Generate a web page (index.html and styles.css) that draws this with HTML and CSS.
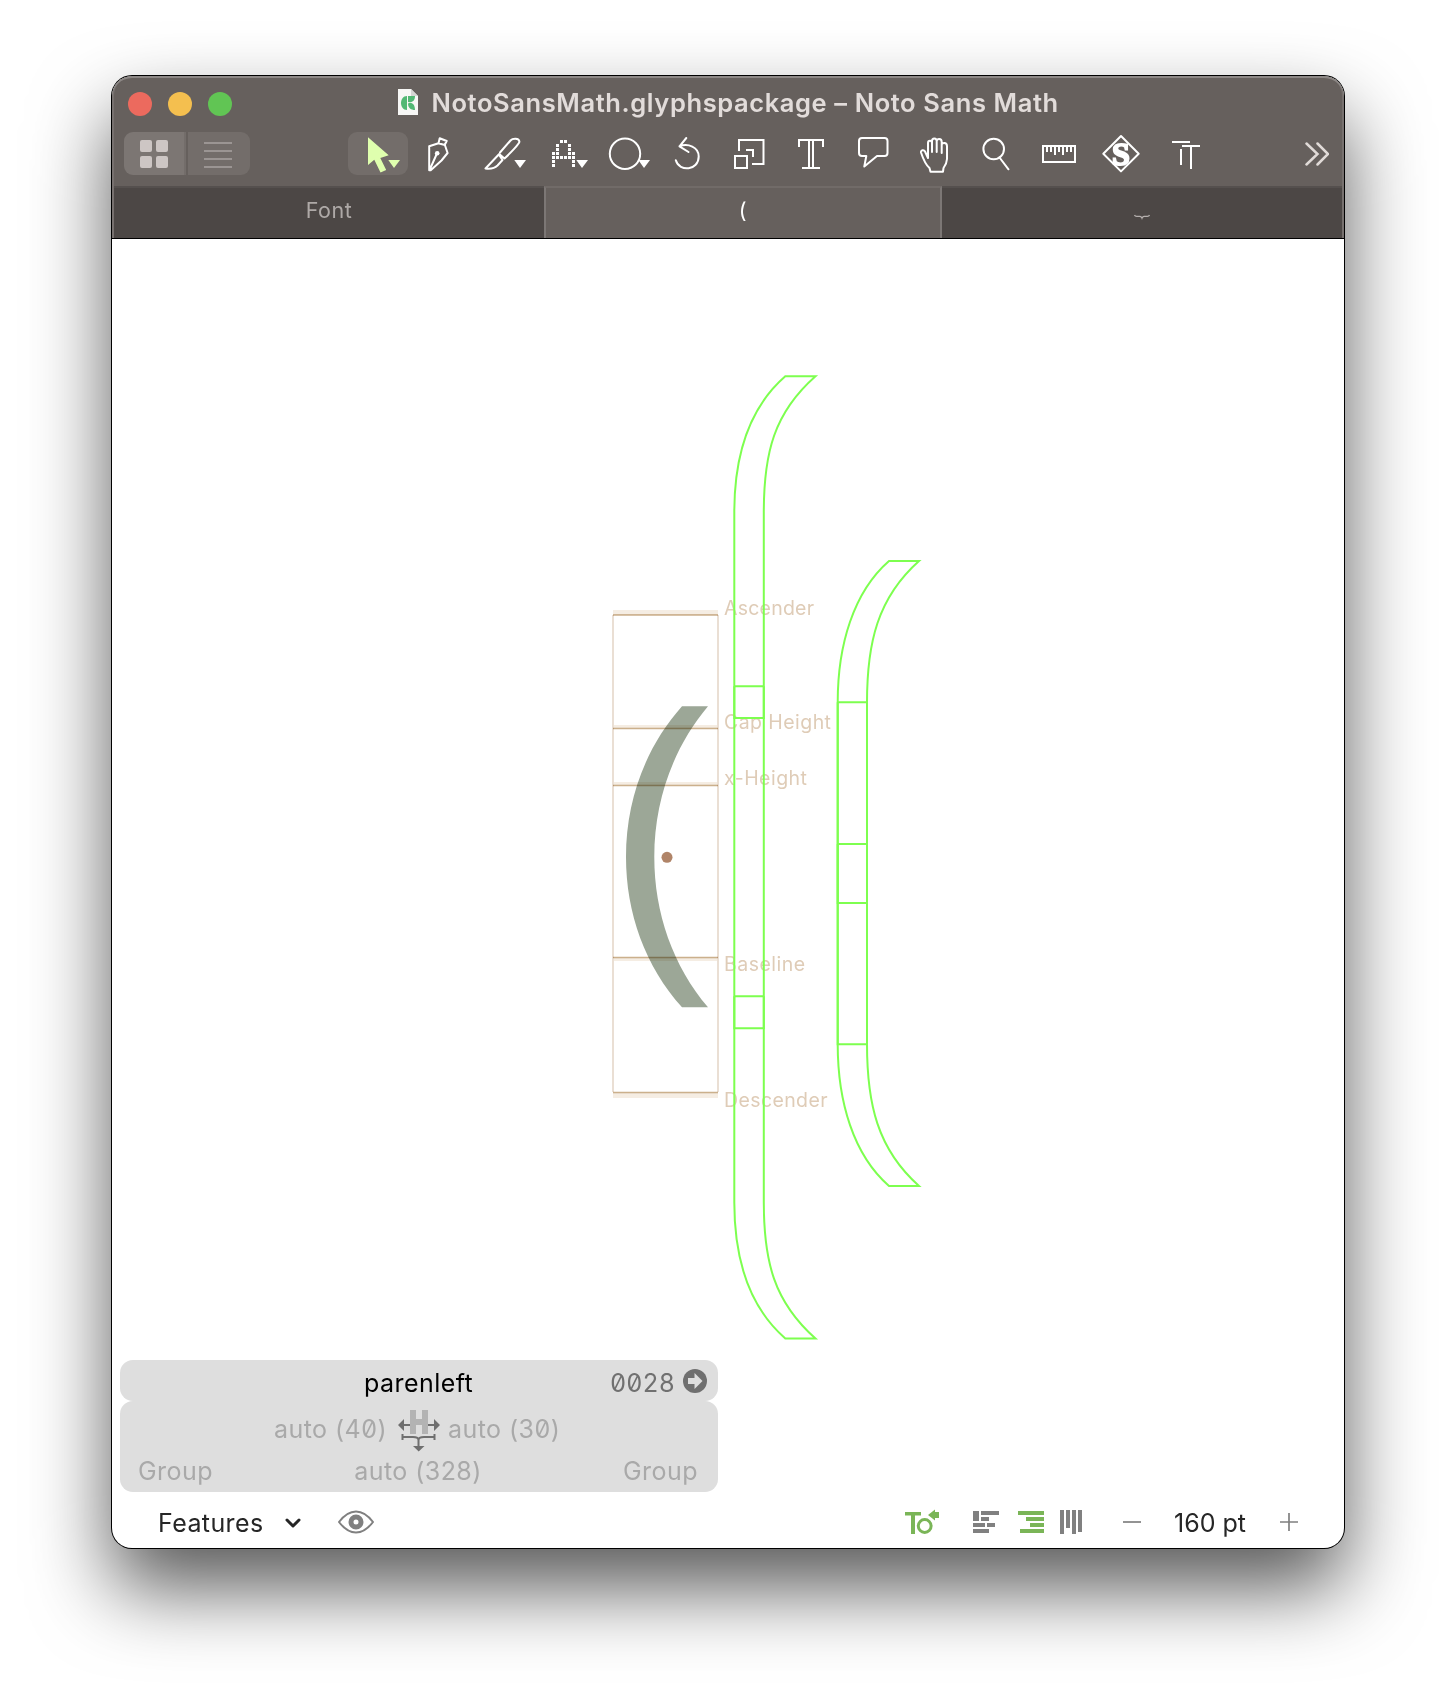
FILE: index.html
```html
<!DOCTYPE html>
<html lang="en">
<head>
<meta charset="utf-8">
<title>NotoSansMath.glyphspackage – Noto Sans Math</title>
<link rel="stylesheet" href="styles.css">
</head>
<body>
<main class="window">
  <header class="chrome">
    <div class="titlebar">
      <div class="lights"><i class="light red"></i><i class="light yellow"></i><i class="light green"></i></div>
      <svg class="doc" viewBox="0 0 20 26"><path d="M0 0H13L20 7V26H0Z" fill="#f7f7f5"/><path d="M13 0V7H20Z" fill="#d5d5d3"/><path d="M9 7C1 7 1 21 9 21ZM10 7H17C17 12 14 14 10 13ZM10 14.500C14 13 17 15 17 21C13 21 10 19 10 14.500Z" fill="#52b874"/></svg>
      <h1 class="title">NotoSansMath.glyphspackage – Noto Sans Math</h1>
    </div>
    <div class="toolbar">
      <div class="views">
        <span class="view view-on"><svg width="28" height="28" fill="#cdc6c4"><rect width="12" height="12" rx="2"/><rect x="16" width="12" height="12" rx="2"/><rect y="16" width="12" height="12" rx="2"/><rect x="16" y="16" width="12" height="12" rx="2"/></svg></span>
        <span class="view view-off"><svg width="28" height="28" fill="#9b9593"><path d="M0 2h28v2H0zM0 10h28v2H0zM0 18h28v2H0zM0 26h28v2H0z"/></svg></span>
      </div>
      <div class="tools">
        <svg viewBox="347 132 62 43"><rect x="348" y="132" width="60" height="43" rx="9" fill="#736d6a"/><path class="lime" d="M368 137.300V165L374.300 159.700L380.500 172.500L386.200 170L380.300 158L388.700 155.300ZM388.300 160H400L394 168Z"/></svg>
        <svg viewBox="409 132 62 43"><path class="line" d="M429.200 146.300V170.300H430.700L441.500 160.500L447.600 153L444.800 144.800L446.700 141L439.700 138.300L438.500 143.200ZM438.300 143.200L444.800 145M430 169L436.500 154.500"/><circle class="fill" cx="437.200" cy="153.200" r="2.300"/></svg>
        <svg viewBox="471 132 62 43"><path class="line" d="M500 152.500L510.500 140.500C512.500 138.400 519 137.800 519.400 141.700C519.600 143.500 510 153.500 504.500 158.500L499.200 154L485.500 168.500C491 169.200 494.500 168.500 497.500 165.500L502.500 160L499.500 155.500"/><path class="fill" d="M514.300 160H526L520 168Z"/></svg>
        <svg viewBox="533 132 62 43"><path class="fill" d="M560 140h3v3h-3zM564 140h3v3h-3zM556 144h3v3h-3zM568 144h3v3h-3zM556 148h3v3h-3zM568 148h3v3h-3zM552 152h3v3h-3zM556 152h3v3h-3zM568 152h3v3h-3zM572 152h3v3h-3zM552 156h3v3h-3zM556 156h3v3h-3zM560 156h3v3h-3zM564 156h3v3h-3zM568 156h3v3h-3zM572 156h3v3h-3zM552 160h3v3h-3zM572 160h3v3h-3zM552 164h3v3h-3zM572 164h3v3h-3zM576.300 160H588L582 168Z"/></svg>
        <svg viewBox="595 132 62 43"><circle class="line" cx="625" cy="153.700" r="15.200"/><path class="fill" d="M638.300 160H650L644 168Z"/></svg>
        <svg viewBox="657 132 62 43"><path class="line" d="M686.300 138L679.500 146.300L688.500 152M679.500 146.300C688 143 698.700 147 698.700 156.500C698.700 170.500 679.500 172.500 675.800 160.300"/></svg>
        <svg viewBox="719 132 62 43"><path class="line square" d="M739 151V140H763.500V164H752M746 150H753V157M735 156H747V168H735Z"/></svg>
        <svg viewBox="781 132 62 43"><path class="line square" d="M799 147V140H823V147M809 140V168M813 140V168M802 168H820"/></svg>
        <svg viewBox="843 132 62 43"><path class="line" d="M862 138H884.500Q887.500 138 887.500 141V153Q887.500 156 884.500 156H877L864.300 166.500L866.300 156H862Q859 156 859 153V141Q859 138 862 138Z"/></svg>
        <svg viewBox="905 132 62 43"><path class="line" d="M930.500 171.700L929.500 168C926.500 165.500 923.500 160 921 152.500C920.500 150 924 149.500 925 151.500L928 158V143C928 140 932 140 932 143V152V141C932 137.500 936.700 137.500 936.700 141V152V141.500C936.700 138 941.700 138 941.700 142V153V145C941.700 142.500 946.800 142 947 146V159C946.800 163 945 166 943.500 168L943 171.700Z"/></svg>
        <svg viewBox="967 132 62 43"><circle class="line" cx="993.700" cy="149" r="10.300"/><path class="line" d="M999.500 157.500L1008.500 169.300" stroke-width="2.500"/></svg>
        <svg viewBox="1029 132 62 43"><path class="line square" d="M1043 146H1075V162H1043ZM1047 147V152M1051 147V152M1055 147V155M1059 147V152M1063 147V155M1067 147V152M1071 147V152"/></svg>
        <svg viewBox="1091 132 62 43"><path class="line" d="M1121 136L1138.700 153.700L1121 171.400L1103.300 153.700Z"/><text class="s-letter" x="1121" y="164.500" text-anchor="middle">S</text></svg>
        <svg viewBox="1153 132 62 43"><path class="line square" d="M1172 142H1190M1181 149V165M1182 146H1200M1191 146V169"/></svg>
      </div>
      <svg class="more" width="24" height="24"><path d="M1.500 1.500L12.500 12L1.500 22.500M12.500 1.500L23 12L12.500 22.500"/></svg>
    </div>
    <nav class="tabs">
      <span class="tab tab-font">Font</span>
      <span class="tab tab-active">(</span>
      <span class="tab tab-last"><svg width="16" height="6"><path d="M.5 1Q1 2.500 3 2.300H6Q7.500 2.500 8 4Q8.500 2.500 10 2.300H13Q15 2.500 15.500 1" fill="none" stroke="#b5b0ae" stroke-width="1.300"/></svg></span>
    </nav>
  </header>

  <svg class="canvas" viewBox="112 239 1232 1121">
    <path class="paren" d="M682 706.300H708C673 748 654.300 801 654.300 857S673 966 708 1007.300H682C645 966 626 913 626 857S645 748 682 706.300Z"/>
    <path class="zones" d="M613 610H718V615H613ZM613 725H718V728H613ZM613 782H718V785H613ZM613 958H718V961H613ZM613 1093H718V1098H613Z"/>
    <path class="sides" d="M613 615V1092M718 615V1092"/>
    <path class="metrics" d="M613 615H718M613 728.500H718M613 785.500H718M613 957.500H718M613 1092.500H718"/>
    <circle cx="667" cy="857.300" r="5.500" fill="#b08468"/>
    <g class="labels">
      <text x="724" y="615" textLength="90">Ascender</text>
      <text x="724" y="729" textLength="107">Cap Height</text>
      <text x="724" y="785" textLength="83">x-Height</text>
      <text x="724" y="971" textLength="81">Baseline</text>
      <text x="724" y="1107" textLength="103.500">Descender</text>
    </g>
    <g class="outlines">
      <path d="M734.300 718V512C734.300 455 750 407 785.300 376.300H815.500C774 413 763.800 453 763.800 512V718ZM734.300 686.300H763.800"/>
      <path d="M734.300 686.300V1028.300H763.800V686.300M734.300 996.300H763.800"/>
      <path d="M734.300 996.300V1202.600C734.300 1259.600 750 1307.600 785.300 1338.500H815.500C774 1301.600 763.800 1261.600 763.800 1202.600V996.300"/>
      <path d="M837.700 903V702.300C837.700 645 853.500 592 889 561H919C877.500 598 867 643 867 702.300V903ZM837.700 702.300H867M837.700 844H867"/>
      <path d="M837.700 702.300V1044.300H867V702.300"/>
      <path d="M837.700 844V1044.300C837.700 1102 853.500 1155 889 1186H919C877.500 1149 867 1104 867 1044.300V844"/>
    </g>
  </svg>

  <section class="info">
    <div class="card name-card">
      <span class="glyph-name">parenleft</span>
      <span class="unicode">0028</span>
      <svg class="go" width="24" height="24"><circle cx="12" cy="12" r="12" fill="#6f6f6f"/><path d="M5 9H11.500V4L19.500 12L11.500 20V15H5Z" fill="#dedede"/></svg>
    </div>
    <div class="card metric-card">
      <div class="bearings">
        <span class="lsb">auto (40)</span>
        <svg width="42" height="42"><path d="M12 0H18V9H24V0H30V24H24V15H18V24H12Z" fill="#b3b3b3"/><path d="M6 15H12M30 15H36M4.500 24V30M36.500 24V30M4.500 27H15Q20.500 27 20.500 30Q20.500 27 26 27H36.500M20.500 29V37" fill="none" stroke="#6f6f6f" stroke-width="2"/><path d="M0 15L6 9V21ZM42 15L36 9V21ZM15 36H26.500L20.700 41.500Z" fill="#6f6f6f"/></svg>
        <span class="rsb">auto (30)</span>
      </div>
      <div class="groups"><span>Group</span><span class="advance">auto (328)</span><span class="right">Group</span></div>
    </div>
  </section>

  <footer class="status">
    <span class="features">Features</span>
    <svg class="chevron" width="16" height="10"><path d="M2 2L8 8L14 2" fill="none" stroke="#262626" stroke-width="3" stroke-linecap="round" stroke-linejoin="round"/></svg>
    <svg class="eye" width="36" height="24"><path d="M1 12Q9 1.500 18 1.500T35 12Q27 22.500 18 22.500T1 12Z" fill="none" stroke="#808080" stroke-width="2"/><circle cx="18" cy="12" r="5" fill="none" stroke="#808080" stroke-width="5"/></svg>
    <svg class="modes" viewBox="904 1508 180 26">
      <path fill="#7ab557" d="M905 1511H921V1514.500H915V1533H911V1514.500H905ZM928 1514L935 1508.500V1511H939V1517H935V1519.500Z"/><circle cx="924.700" cy="1525" r="6.400" fill="none" stroke="#7ab557" stroke-width="3"/>
      <path fill="#808080" d="M973 1510H979V1520H973ZM981 1510H999V1514H981ZM981 1516H989V1520H981ZM973 1522H985V1526H973ZM987 1522H995V1526H987ZM973 1528H989V1532H973Z"/>
      <path fill="#7ab557" d="M1018 1510H1044V1514H1018ZM1026 1516H1044V1520H1026ZM1030 1522H1044V1526H1030ZM1020 1528H1044V1532H1020Z"/>
      <path fill="#808080" d="M1060 1509H1064V1533H1060ZM1066 1509H1070V1527H1066ZM1072 1509H1076V1533H1072ZM1078 1509H1082V1531H1078Z"/>
    </svg>
    <svg class="minus" width="18" height="18"><path d="M0 9H18" stroke="#808080" stroke-width="1.700"/></svg>
    <span class="size">160 pt</span>
    <svg class="plus" width="18" height="18"><path d="M0 9H18M9 0V18" stroke="#808080" stroke-width="1.700"/></svg>
  </footer>
</main>
</body>
</html>
```
FILE: styles.css
```css
* { box-sizing: border-box; }
body {
  margin: 0;
  padding: 76px 112px 0;
  height: 1696px;
  overflow: hidden;
  background: #fff;
  font-family: Inter, "Liberation Sans", sans-serif;
}
svg { display: block; flex: none; }
.window {
  width: 1232px;
  height: 1472px;
  border-radius: 20px;
  overflow: hidden;
  display: flex;
  flex-direction: column;
  background: #fff;
  box-shadow: 0 0 0 1px #000, 0 40px 80px rgba(0, 0, 0, .66);
}
.chrome {
  height: 163px;
  flex: none;
  background: #66605d;
  border-bottom: 1px solid #000;
  border-radius: 20px 20px 0 0;
  box-shadow: inset 0 2px 0 #8d8886, inset 2px 0 0 #77716f, inset -2px 0 0 #77716f;
}
.titlebar { height: 56px; display: flex; align-items: center; padding-left: 16px; }
.lights { display: flex; gap: 16px; width: 270px; }
.light { width: 24px; height: 24px; border-radius: 50%; }
.red { background: #ec6a5e; }
.yellow { background: #f4bf4f; }
.green { background: #61c554; }
.doc { width: 20px; height: 26px; margin-top: -4px; }
.title {
  margin: 0 0 0 13.500px;
  font-size: 25.500px;
  font-weight: 600;
  letter-spacing: .6px;
  line-height: 30px;
  padding-bottom: 2px;
  color: #e2dcda;
  white-space: nowrap;
}
.toolbar { height: 54px; display: flex; padding-left: 12px; }
.views { display: flex; gap: 2px; width: 223px; height: 43px; }
.view { display: flex; align-items: center; justify-content: center; height: 43px; }
.view-on { width: 62px; background: linear-gradient(90deg, #7c7673 60px, #736d6a 60px); border-radius: 9px 0 0 9px; padding-right: 2px; }
.view-off { width: 62px; background: #736d6a; border-radius: 0 9px 9px 0; padding-right: 2px; }
.tools { display: flex; width: 868px; height: 43px; }
.tools svg { width: 62px; height: 43px; }
.lime { fill: #dfffae; }
.fill { fill: #fff; }
.line { fill: none; stroke: #fff; stroke-width: 2; stroke-linejoin: round; stroke-linecap: round; }
.square { stroke-linejoin: miter; stroke-linecap: butt; }
.s-letter { font: bold 32px "Liberation Serif", serif; fill: #fff; stroke: #fff; stroke-width: 2px; }
.more { margin: 10px 0 0 90px; fill: none; stroke: #e0dad7; stroke-width: 2.500; stroke-linecap: round; }
.tabs { display: flex; height: 52px; margin: 0 2px; }
.tab {
  display: flex;
  align-items: center;
  justify-content: center;
  font-size: 21.500px;
  letter-spacing: .5px;
  color: #aea9a7;
  background: #4c4745;
  border-top: 2px solid #55504e;
  padding-bottom: 7px;
}
.tab-font { width: 430px; }
.tab-active { width: 398px; background: #66605d; color: #fff; border-left: 2px solid #7c7775; border-right: 2px solid #7c7775; border-top-color: #716b68; }
.tab-last { flex: 1; }
.tab-last svg { margin-top: 15px; }
.canvas { width: 1232px; height: 1121px; }
.paren { fill: #9ca797; }
.zones { fill: #e9d6c0; opacity: .45; mix-blend-mode: multiply; }
.sides { stroke: #eadfd4; stroke-width: 2; }
.metrics { stroke: #cbb08c; stroke-width: 1.500; mix-blend-mode: multiply; }
.labels { fill: #dfccb7; font-size: 19.500px; }
.outlines { fill: none; stroke: #7dff4f; stroke-width: 2; }
.info { width: 598px; margin-left: 8px; font-size: 25px; letter-spacing: .45px; color: #a9a9a9; white-space: nowrap; }
.card { background: #dedede; border-radius: 13px; }
.name-card {
  height: 41px;
  display: grid;
  grid-template-columns: 244px 247px 72px 24px;
  align-items: center;
}
.glyph-name { grid-column: 2; color: #000; line-height: 30px; padding-top: 4px; }
.unicode { color: #707070; font-feature-settings: "zero", "tnum"; line-height: 30px; padding-top: 4px; letter-spacing: 0; margin-left: -1px; }
.metric-card { height: 91px; font-feature-settings: "zero"; }
.bearings { height: 50px; display: grid; grid-template-columns: 267px 42px 1fr; column-gap: 11px; padding-top: 9px; }
.lsb { text-align: right; line-height: 38px; }
.rsb { line-height: 38px; margin-left: -3px; }
.groups { display: grid; grid-template-columns: 1fr auto 1fr; padding: 0 20px 0 18px; line-height: 40px; }
.right { text-align: right; }
.status { height: 56px; display: flex; align-items: center; padding: 3px 0 0 46px; font-size: 25px; letter-spacing: .4px; color: #262626; white-space: nowrap; }
.features { width: 126px; padding-top: 3px; }
.chevron { margin-left: 1px; margin-top: 2px; }
.eye { margin-left: 37px; }
.modes { width: 180px; height: 26px; margin-left: 530px; }
.minus { margin-left: 39px; }
.size { width: 72px; margin-left: 33px; padding-top: 3px; letter-spacing: 0; }
.plus { margin-left: 34px; }
```
